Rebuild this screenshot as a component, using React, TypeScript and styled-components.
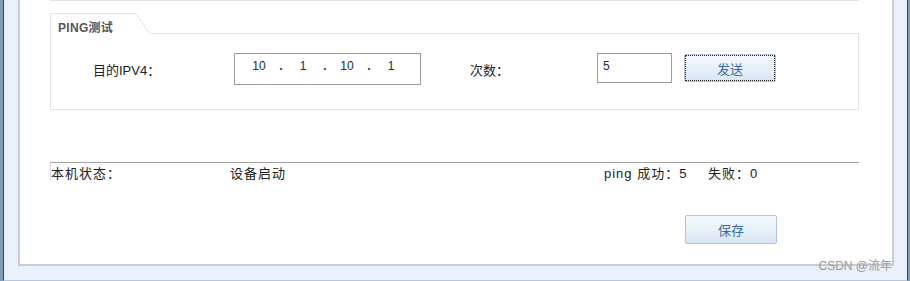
import * as React from "react";
import styled, { createGlobalStyle } from "styled-components";

const GlobalStyle = createGlobalStyle`
  html, body {
    margin: 0;
    padding: 0;
    background: #e9f0fc;
  }
  body {
    font-family: "Liberation Sans", "Noto Sans CJK SC", sans-serif;
    font-size: 12px;
    color: #222;
  }
`;

const Window = styled.div`
  position: relative;
  width: 910px;
  height: 281px;
  box-sizing: border-box;
  background: #7f9dba;
  padding: 0 2px 0 3px;
  display: flex;
  overflow: hidden;
`;

const Frame = styled.div`
  flex: 1;
  display: flex;
  flex-direction: column;
  background: #e9f0fc;
  border-left: 1px solid #38475a;
  border-right: 1px solid #38475a;
  border-bottom: 1px solid #b9c6d6;
  padding: 0 13px 14px 14px;
`;

const Panel = styled.div`
  flex: 1;
  display: flex;
  flex-direction: column;
  background: #fff;
  border: 2px solid #c9ccd3;
  border-top: none;
  padding: 0 33px 0 30px;
`;

const PrevSectionEnd = styled.div`
  height: 0;
  border-bottom: 1px solid #e2e2e2;
`;

const TabRow = styled.div`
  display: flex;
  height: 21px;
  margin-top: 12px;
`;

const TabLabel = styled.div`
  width: 86px;
  box-sizing: border-box;
  border-top: 1px solid #e2e2e2;
  border-left: 1px solid #e2e2e2;
  padding: 4px 0 0 7px;
  font-weight: bold;
  font-size: 12px;
  color: #555;
  letter-spacing: 0.3px;
`;

const TabSlant = styled.svg`
  width: 14px;
  height: 21px;
  display: block;
`;

const TabRest = styled.div`
  flex: 1;
  border-bottom: 1px solid #e2e2e2;
`;

const Box = styled.div`
  border: 1px solid #e2e2e2;
  border-top: none;
  padding: 19px 0 24px 42px;
  display: flex;
  align-items: flex-start;
`;

const FieldLabel = styled.div<{ $width: number; $gap?: number }>`
  width: ${(p) => p.$width}px;
  margin-left: ${(p) => p.$gap ?? 0}px;
  padding-top: 7px;
  font-size: 13px;
  color: #222;
`;

const IpInput = styled.div`
  width: 187px;
  height: 32px;
  box-sizing: border-box;
  border: 1px solid #9c9c9c;
  display: flex;
  padding: 5px 0 0 10px;
`;

const Octet = styled.span`
  width: 28px;
  text-align: center;
  font-size: 12px;
  color: #1e2a44;
`;

const Dot = styled.span`
  width: 16px;
  text-align: center;
  font-weight: bold;
  color: #333;
`;

const CountInput = styled.div`
  width: 75px;
  height: 30px;
  box-sizing: border-box;
  border: 1px solid #9c9c9c;
  padding: 5px 0 0 5px;
  font-size: 12px;
  color: #1e2a44;
  margin-right: 12px;
`;

const Button = styled.button<{ $focused?: boolean }>`
  width: 92px;
  height: ${(p) => (p.$focused ? 28 : 29)}px;
  box-sizing: border-box;
  border: 1px solid #b3c2d4;
  border-radius: 2px;
  background: linear-gradient(#f6f9fd 0%, #e9f0f9 50%, #d9e5f3 100%);
  color: #3a6aa6;
  font-family: "Noto Sans CJK SC", sans-serif;
  font-size: 13px;
  padding: 0;
  margin-top: ${(p) => (p.$focused ? 1 : 0)}px;
  outline: ${(p) => (p.$focused ? "1px dotted #222" : "none")};
  outline-offset: -2px;
`;

const StatusBar = styled.div`
  margin-top: 52px;
  height: 18px;
  border-top: 1px solid #a4a4a4;
  border-left: 1px solid #d8d8d8;
  display: flex;
  align-items: center;
  font-size: 13px;
  letter-spacing: 1px;
`;

const StatusCell = styled.span<{ $width?: number }>`
  width: ${(p) => (p.$width ? `${p.$width}px` : "auto")};
  white-space: pre;
`;

const SaveRow = styled.div`
  margin-top: 34px;
  display: flex;
  justify-content: flex-end;
  padding-right: 82px;
`;

const Watermark = styled.div`
  position: absolute;
  right: 18px;
  bottom: 8px;
  font-family: "Liberation Sans", "Noto Sans CJK SC", sans-serif;
  font-size: 12px;
  color: #9a9a9a;
`;

export default function App() {
  return (
    <>
      <GlobalStyle />
      <Window>
        <Frame>
          <Panel>
            <PrevSectionEnd />
            <TabRow>
              <TabLabel>PING测试</TabLabel>
              <TabSlant viewBox="0 0 14 21">
                <line x1="0" y1="0.5" x2="13.5" y2="20.5" stroke="#e2e2e2" strokeWidth="1" />
              </TabSlant>
              <TabRest />
            </TabRow>
            <Box>
              <FieldLabel $width={141}>目的IPV4：</FieldLabel>
              <IpInput>
                <Octet>10</Octet>
                <Dot>.</Dot>
                <Octet>1</Octet>
                <Dot>.</Dot>
                <Octet>10</Octet>
                <Dot>.</Dot>
                <Octet>1</Octet>
              </IpInput>
              <FieldLabel $width={127} $gap={49}>
                次数：
              </FieldLabel>
              <CountInput>5</CountInput>
              <Button $focused>发送</Button>
            </Box>
            <StatusBar>
              <StatusCell $width={179}>本机状态：</StatusCell>
              <StatusCell $width={374}>设备启动</StatusCell>
              <StatusCell $width={104}>ping 成功：5</StatusCell>
              <StatusCell>失败：0</StatusCell>
            </StatusBar>
            <SaveRow>
              <Button>保存</Button>
            </SaveRow>
          </Panel>
        </Frame>
        <Watermark>CSDN @流年</Watermark>
      </Window>
    </>
  );
}
